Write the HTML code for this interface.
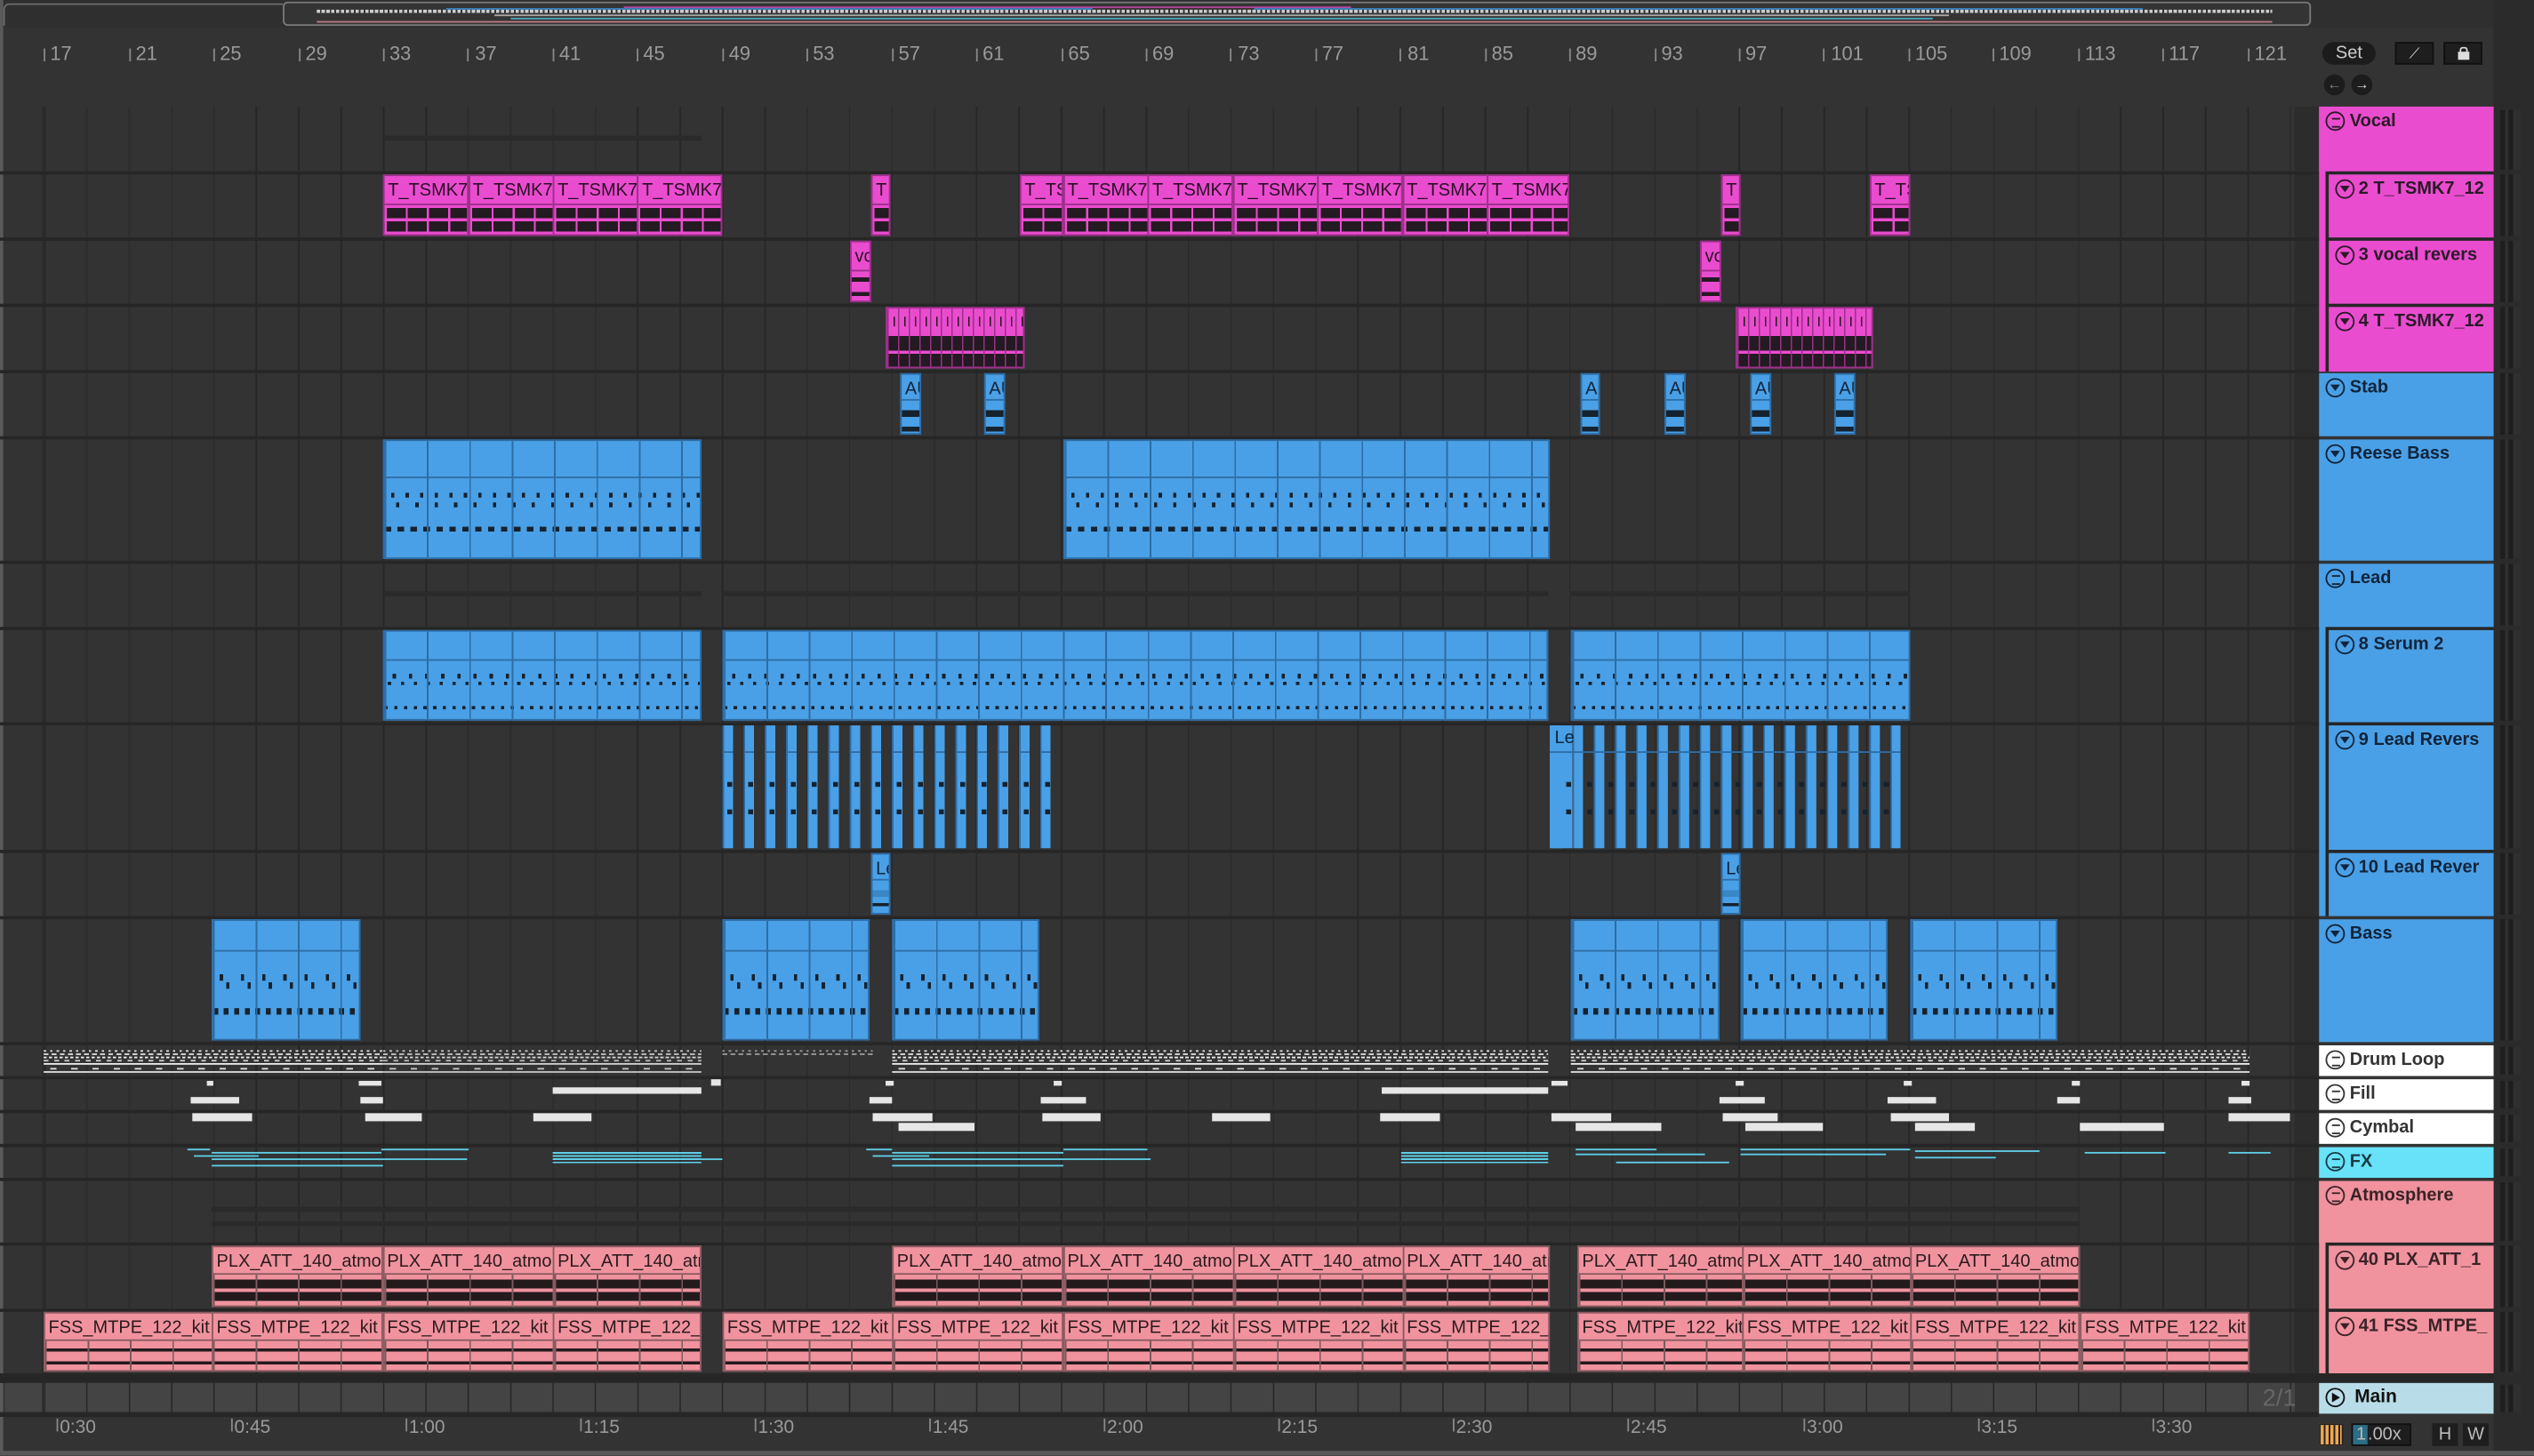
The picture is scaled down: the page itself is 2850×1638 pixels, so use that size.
<!DOCTYPE html>
<html><head><meta charset="utf-8"><style>
html,body{margin:0;padding:0;background:#2b2b2b;overflow:hidden;width:2850px;height:1638px}
#s{position:absolute;left:0;top:0;width:1568px;height:901.2px;transform:scale(1.8176);transform-origin:0 0;background:#333;font-family:"Liberation Sans",sans-serif;overflow:hidden}
.a{position:absolute}
.sep{position:absolute;left:0;width:1435px;height:2px;background:#262626}
.c{position:absolute;box-sizing:border-box;overflow:hidden;font-size:11px;white-space:nowrap}
.c b{position:absolute;left:2px;top:1.5px;font-weight:normal;line-height:14px}
.p{background:#ea4ccf;border:1px solid #9b2f8a;color:#2a0f26}
.pw{position:absolute;left:0;right:0;top:17px;bottom:0;border-top:1px solid #9b2f8a;background-color:#ea4ccf;background-image:repeating-linear-gradient(90deg,#ea4ccf 0 1.2px,#0000 1.2px 13.11px),linear-gradient(#0000 10%,#241a22 10% 45%,#0000 45% 55%,#241a22 55% 90%,#0000 90%)}
.s{background:#f0939f;border:1px solid #8a5a60;color:#2a1a1c}
.sw{position:absolute;left:0;right:0;top:16px;bottom:0;border-top:1px solid #8a5a60;background:repeating-linear-gradient(90deg,#7a5a5e 0 1px,#0000 1px 26.2px),linear-gradient(#0000 15%,#231a1c 15% 44%,#0000 44% 56%,#231a1c 56% 85%,#0000 85%)}
.sw2{position:absolute;left:0;right:0;top:16px;bottom:0;border-top:1px solid #8a5a60;background:repeating-linear-gradient(90deg,#7a5a5e 0 1px,#0000 1px 26.2px),linear-gradient(#0000 26%,#231a1c 26% 36%,#0000 36% 70%,#231a1c 70% 80%,#0000 80%)}
.b{background:#4aa0e6;border:1px solid #2d6da6;color:#10243a}
.bh{position:absolute;left:0;right:0;top:15px;height:1px;background:#2d6da6}
.hd{position:absolute;box-sizing:border-box;font-weight:bold;font-size:11px;color:#2a1a28}
.hd i{position:absolute;left:4px;top:3px;width:12px;height:12px;border:1.3px solid currentColor;border-radius:50%;box-sizing:border-box}
.hd i.t::after{content:"";position:absolute;left:2.4px;top:3.2px;border-left:3px solid transparent;border-right:3px solid transparent;border-top:4px solid currentColor}
.hd i.l::after{content:"";position:absolute;left:2.5px;top:2.8px;width:5px;height:4px;border-top:1px solid currentColor;border-bottom:1px solid currentColor}
.hd span{position:absolute;left:19px;top:3px;line-height:13px}
.m{position:absolute;left:1547px;width:13px;background:repeating-linear-gradient(90deg,#1e1e1e 0 3px,#2f2f2f 3px 5px,#1e1e1e 5px 8px,#2f2f2f 8px 13px)}
.rn{position:absolute;top:26px;font-size:12px;color:#9a9a9a}
.rt{position:absolute;top:30px;width:1px;height:8px;background:#888}
.tl{position:absolute;top:878px;font-size:11.5px;color:#9a9a9a}
.tt{position:absolute;top:878px;width:1px;height:8px;background:#888}
.w{position:absolute;background:#e6e6e6}
.fx{position:absolute;height:1px;background:#5fd0e8}
.dl{position:absolute;height:16px;background:
repeating-linear-gradient(90deg,#ddd 0 1.5px,#0000 1.5px 4px) 0 2px/100% 1px no-repeat,
repeating-linear-gradient(90deg,#ddd 0 3px,#0000 3px 5px) 0 4px/100% 1.2px no-repeat,
repeating-linear-gradient(90deg,#eee 0 2px,#0000 2px 3.3px) 0 6px/100% 1.2px no-repeat,
repeating-linear-gradient(90deg,#ccc 0 3px,#0000 3px 6.5px) 0 8px/100% 1px no-repeat,
linear-gradient(#eee,#eee) 0 10px/100% 1px no-repeat,
repeating-linear-gradient(90deg,#0000 0 4px,#ddd 4px 8px,#0000 8px 13.1px) 0 12.5px/100% 1px no-repeat,
linear-gradient(#ddd,#ddd) 0 14.5px/100% 1px no-repeat}
.grp{position:absolute;height:3px;background:#2a2a2a}
</style></head><body><div id="s">

<div class="a" style="left:0;top:0;width:1568px;height:17px;background:#2f2f2f"></div>
<div class="a" style="left:2px;top:2px;width:173px;height:14px;border:1.5px solid #6e6e6e;border-right:none;border-bottom:none;border-radius:4px 0 0 0;box-sizing:border-box"></div>
<div class="a" style="left:175px;top:1px;width:1255px;height:15px;border:1.5px solid #7a7a7a;border-radius:3px;box-sizing:border-box;background:#343434">
 <div class="a" style="left:20px;top:4px;width:1210px;height:2px;background:repeating-linear-gradient(90deg,#ccc 0 2px,#0000 2px 3px)"></div>
 <div class="a" style="left:210px;top:2px;width:450px;height:1px;background:#b348a0"></div>
 <div class="a" style="left:100px;top:3px;width:400px;height:1px;background:#3b82c0"></div>
 <div class="a" style="left:600px;top:3px;width:550px;height:1px;background:#3b82c0"></div>
 <div class="a" style="left:130px;top:7px;width:900px;height:1px;background:#aaa"></div>
 <div class="a" style="left:140px;top:9px;width:880px;height:1px;background:#4aa7bd"></div>
 <div class="a" style="left:20px;top:11px;width:1210px;height:1px;background:#c07a85"></div>
</div>
<div class="a" style="left:0;top:17px;width:1435px;height:49px;background:#333"></div>
<div class="a" style="left:0;top:0;width:2px;height:901px;background:#5a5a5a"></div>

<div class="rt" style="left:27px"></div><div class="rn" style="left:31px">17</div>
<div class="rt" style="left:79.6px"></div><div class="rn" style="left:84px">21</div>
<div class="rt" style="left:132px"></div><div class="rn" style="left:136px">25</div>
<div class="rt" style="left:184.5px"></div><div class="rn" style="left:189px">29</div>
<div class="rt" style="left:237px"></div><div class="rn" style="left:241px">33</div>
<div class="rt" style="left:289.4px"></div><div class="rn" style="left:294px">37</div>
<div class="rt" style="left:341.8px"></div><div class="rn" style="left:346px">41</div>
<div class="rt" style="left:394.3px"></div><div class="rn" style="left:398px">45</div>
<div class="rt" style="left:446.7px"></div><div class="rn" style="left:451px">49</div>
<div class="rt" style="left:499.2px"></div><div class="rn" style="left:503px">53</div>
<div class="rt" style="left:551.6px"></div><div class="rn" style="left:556px">57</div>
<div class="rt" style="left:604px"></div><div class="rn" style="left:608px">61</div>
<div class="rt" style="left:656.5px"></div><div class="rn" style="left:661px">65</div>
<div class="rt" style="left:708.9px"></div><div class="rn" style="left:713px">69</div>
<div class="rt" style="left:761.4px"></div><div class="rn" style="left:766px">73</div>
<div class="rt" style="left:813.8px"></div><div class="rn" style="left:818px">77</div>
<div class="rt" style="left:866.2px"></div><div class="rn" style="left:871px">81</div>
<div class="rt" style="left:918.7px"></div><div class="rn" style="left:923px">85</div>
<div class="rt" style="left:971.1px"></div><div class="rn" style="left:975px">89</div>
<div class="rt" style="left:1023.6px"></div><div class="rn" style="left:1028px">93</div>
<div class="rt" style="left:1076px"></div><div class="rn" style="left:1080px">97</div>
<div class="rt" style="left:1128.4px"></div><div class="rn" style="left:1133px">101</div>
<div class="rt" style="left:1180.9px"></div><div class="rn" style="left:1185px">105</div>
<div class="rt" style="left:1233.3px"></div><div class="rn" style="left:1237px">109</div>
<div class="rt" style="left:1285.8px"></div><div class="rn" style="left:1290px">113</div>
<div class="rt" style="left:1338.2px"></div><div class="rn" style="left:1342px">117</div>
<div class="rt" style="left:1390.6px"></div><div class="rn" style="left:1395px">121</div>

<div class="a" style="left:1437px;top:26px;width:33px;height:14px;background:#1c1c1c;border-radius:7px;color:#ccc;font-size:11px;text-align:center;line-height:14px">Set</div>
<div class="a" style="left:1482px;top:26px;width:24px;height:14px;background:#1e1e1e;border:1px solid #111;box-sizing:border-box;color:#ddd;font-size:9px;text-align:center;line-height:12px">⟋</div>
<div class="a" style="left:1512px;top:26px;width:24px;height:14px;background:#1e1e1e;border:1px solid #111;box-sizing:border-box"><div class="a" style="left:8px;top:5px;width:7px;height:5px;background:#ddd"></div><div class="a" style="left:9px;top:2px;width:3px;height:4px;border:1px solid #ddd;border-bottom:none;border-radius:2px 2px 0 0"></div></div>
<div class="a" style="left:1438px;top:46px;width:13px;height:13px;background:#1c1c1c;border-radius:50%;color:#888;font-size:9px;text-align:center;line-height:13px">←</div>
<div class="a" style="left:1455px;top:46px;width:13px;height:13px;background:#1c1c1c;border-radius:50%;color:#ddd;font-size:9px;text-align:center;line-height:13px">→</div>

<div class="a" style="left:3px;top:66px;width:1417px;height:786px;background:repeating-linear-gradient(90deg,#262626 0 0.8px,#333 0.8px 26.22px);background-position:24.2px 0"></div>
<div class="a" style="left:1420px;top:66px;width:15px;height:786px;background:#2c2c2c"></div>
<div class="a" style="left:1543px;top:0;width:25px;height:901px;background:#2b2b2b"></div>

<div class="sep" style="top:106px"></div><div class="sep" style="top:147px"></div><div class="sep" style="top:188px"></div><div class="sep" style="top:229px"></div><div class="sep" style="top:270px"></div><div class="sep" style="top:347px"></div><div class="sep" style="top:388px"></div><div class="sep" style="top:447px"></div><div class="sep" style="top:526px"></div><div class="sep" style="top:567px"></div><div class="sep" style="top:645px"></div><div class="sep" style="top:666px"></div><div class="sep" style="top:687px"></div><div class="sep" style="top:708px"></div><div class="sep" style="top:729px"></div><div class="sep" style="top:769px"></div><div class="sep" style="top:810px"></div>
<div class="a" style="left:0;top:850px;width:1543px;height:6px;background:#262626"></div>
<div class="a" style="left:3px;top:856px;width:1417px;height:19px;background:#444 repeating-linear-gradient(90deg,#262626 0 0.8px,#444 0.8px 26.22px);background-position:24.2px 0"></div>
<div class="a" style="left:0;top:874px;width:1435px;height:3px;background:#262626"></div>
<div class="a" style="left:1400px;top:856px;width:35px;height:19px;color:#666;font-size:15px;line-height:19px">2/1</div>

<div class="grp" style="left:237px;top:84px;width:197px"></div>
<div class="grp" style="left:237px;top:366px;width:197px"></div><div class="grp" style="left:447px;top:366px;width:511px"></div><div class="grp" style="left:972px;top:366px;width:210px"></div>
<div class="grp" style="left:131px;top:747px;width:1156px"></div><div class="grp" style="left:131px;top:756px;width:1156px"></div>

<div class="c p" style="left:237px;top:108px;width:53px;height:38px"><b>T_TSMK7</b><div class="pw"></div></div>
<div class="c p" style="left:289.5px;top:108px;width:53px;height:38px"><b>T_TSMK7</b><div class="pw"></div></div>
<div class="c p" style="left:342px;top:108px;width:53px;height:38px"><b>T_TSMK7</b><div class="pw"></div></div>
<div class="c p" style="left:394.3px;top:108px;width:52.5px;height:38px"><b>T_TSMK7</b><div class="pw"></div></div>
<div class="c p" style="left:539px;top:108px;width:12px;height:38px"><b>T</b><div class="pw"></div></div>
<div class="c p" style="left:631px;top:108px;width:27px;height:38px"><b>T_TS</b><div class="pw"></div></div>
<div class="c p" style="left:657.5px;top:108px;width:53px;height:38px"><b>T_TSMK7</b><div class="pw"></div></div>
<div class="c p" style="left:710px;top:108px;width:53px;height:38px"><b>T_TSMK7</b><div class="pw"></div></div>
<div class="c p" style="left:762.5px;top:108px;width:53px;height:38px"><b>T_TSMK7</b><div class="pw"></div></div>
<div class="c p" style="left:815px;top:108px;width:53px;height:38px"><b>T_TSMK7</b><div class="pw"></div></div>
<div class="c p" style="left:867.5px;top:108px;width:53px;height:38px"><b>T_TSMK7</b><div class="pw"></div></div>
<div class="c p" style="left:920px;top:108px;width:51px;height:38px"><b>T_TSMK7</b><div class="pw"></div></div>
<div class="c p" style="left:1065px;top:108px;width:12px;height:38px"><b>T</b><div class="pw"></div></div>
<div class="c p" style="left:1157px;top:108px;width:25px;height:38px"><b>T_TS</b><div class="pw"></div></div>
<div class="c p" style="left:526px;top:149px;width:13px;height:38px"><b>vo</b><div class="pw" style="background-image:linear-gradient(#0000 20%,#241a22 20% 35%,#0000 35% 70%,#241a22 70% 85%,#0000 85%)"></div></div>
<div class="c p" style="left:1052px;top:149px;width:13px;height:38px"><b>vo</b><div class="pw" style="background-image:linear-gradient(#0000 20%,#241a22 20% 35%,#0000 35% 70%,#241a22 70% 85%,#0000 85%)"></div></div>
<div class="c p" style="left:548px;top:190px;width:86px;height:38px;background:repeating-linear-gradient(90deg,#9b2f89 0 0.8px,#0000 0.8px 6.6px),repeating-linear-gradient(90deg,#0000 0 4px,#241a22 4px 4.8px,#0000 4.8px 6.6px) 0 5px/100% 6px no-repeat,linear-gradient(#0000 17px,#241a22 17px 26px,#0000 26px 28px,#241a22 28px 36px,#0000 36px),#ea4ccf"></div>
<div class="c p" style="left:1074px;top:190px;width:85px;height:38px;background:repeating-linear-gradient(90deg,#9b2f89 0 0.8px,#0000 0.8px 6.6px),repeating-linear-gradient(90deg,#0000 0 4px,#241a22 4px 4.8px,#0000 4.8px 6.6px) 0 5px/100% 6px no-repeat,linear-gradient(#0000 17px,#241a22 17px 26px,#0000 26px 28px,#241a22 28px 36px,#0000 36px),#ea4ccf"></div>

<div class="c b" style="left:557px;top:231px;width:13px;height:38px;background:linear-gradient(#0000 22px,#16222e 22px 26px,#0000 26px 32px,#16222e 32px 35px,#0000 35px),#4aa0e6"><b>AU</b><div class="bh"></div></div>
<div class="c b" style="left:609px;top:231px;width:13px;height:38px;background:linear-gradient(#0000 22px,#16222e 22px 26px,#0000 26px 32px,#16222e 32px 35px,#0000 35px),#4aa0e6"><b>AU</b><div class="bh"></div></div>
<div class="c b" style="left:978px;top:231px;width:12px;height:38px;background:linear-gradient(#0000 22px,#16222e 22px 26px,#0000 26px 32px,#16222e 32px 35px,#0000 35px),#4aa0e6"><b>AU</b><div class="bh"></div></div>
<div class="c b" style="left:1030px;top:231px;width:13px;height:38px;background:linear-gradient(#0000 22px,#16222e 22px 26px,#0000 26px 32px,#16222e 32px 35px,#0000 35px),#4aa0e6"><b>AU</b><div class="bh"></div></div>
<div class="c b" style="left:1083px;top:231px;width:13px;height:38px;background:linear-gradient(#0000 22px,#16222e 22px 26px,#0000 26px 32px,#16222e 32px 35px,#0000 35px),#4aa0e6"><b>AU</b><div class="bh"></div></div>
<div class="c b" style="left:1135px;top:231px;width:13px;height:38px;background:linear-gradient(#0000 22px,#16222e 22px 26px,#0000 26px 32px,#16222e 32px 35px,#0000 35px),#4aa0e6"><b>AU</b><div class="bh"></div></div>

<div class="c b" style="left:237px;top:272px;width:197px;height:74px;background:repeating-linear-gradient(90deg,#2d6da6 0 1px,#0000 1px 26.22px),repeating-linear-gradient(90deg,#0000 0 4px,#16222e 4px 6px,#0000 6px 9px) 0 32px/100% 3px no-repeat,repeating-linear-gradient(90deg,#0000 0 7px,#16222e 7px 9px,#0000 9px 12px) 0 38px/100% 3px no-repeat,repeating-linear-gradient(90deg,#16222e 0 4px,#0000 4px 8px) 0 53px/100% 3px no-repeat,#4aa0e6"><div class="bh" style="top:22px"></div></div>
<div class="c b" style="left:657.5px;top:272px;width:301px;height:74px;background:repeating-linear-gradient(90deg,#2d6da6 0 1px,#0000 1px 26.22px),repeating-linear-gradient(90deg,#0000 0 4px,#16222e 4px 6px,#0000 6px 9px) 0 32px/100% 3px no-repeat,repeating-linear-gradient(90deg,#0000 0 7px,#16222e 7px 9px,#0000 9px 12px) 0 38px/100% 3px no-repeat,repeating-linear-gradient(90deg,#16222e 0 4px,#0000 4px 8px) 0 53px/100% 3px no-repeat,#4aa0e6"><div class="bh" style="top:22px"></div></div>

<div class="c b" style="left:237px;top:390px;width:197px;height:56px;background:repeating-linear-gradient(90deg,#2d6da6 0 1px,#0000 1px 26.22px),repeating-linear-gradient(90deg,#0000 0 5px,#16222e 5px 7px,#0000 7px 10px) 0 26px/100% 3px no-repeat,repeating-linear-gradient(90deg,#0000 0 2px,#16222e 2px 4px,#0000 4px 8px) 0 31px/100% 2px no-repeat,repeating-linear-gradient(90deg,#16222e 0 2px,#0000 2px 6px) 0 46px/100% 2px no-repeat,#4aa0e6"><div class="bh" style="top:17px"></div></div>
<div class="c b" style="left:447px;top:390px;width:511px;height:56px;background:repeating-linear-gradient(90deg,#2d6da6 0 1px,#0000 1px 26.22px),repeating-linear-gradient(90deg,#0000 0 5px,#16222e 5px 7px,#0000 7px 10px) 0 26px/100% 3px no-repeat,repeating-linear-gradient(90deg,#0000 0 2px,#16222e 2px 4px,#0000 4px 8px) 0 31px/100% 2px no-repeat,repeating-linear-gradient(90deg,#16222e 0 2px,#0000 2px 6px) 0 46px/100% 2px no-repeat,#4aa0e6"><div class="bh" style="top:17px"></div></div>
<div class="c b" style="left:972px;top:390px;width:210px;height:56px;background:repeating-linear-gradient(90deg,#2d6da6 0 1px,#0000 1px 26.22px),repeating-linear-gradient(90deg,#0000 0 5px,#16222e 5px 7px,#0000 7px 10px) 0 26px/100% 3px no-repeat,repeating-linear-gradient(90deg,#0000 0 2px,#16222e 2px 4px,#0000 4px 8px) 0 31px/100% 2px no-repeat,repeating-linear-gradient(90deg,#16222e 0 2px,#0000 2px 6px) 0 46px/100% 2px no-repeat,#4aa0e6"><div class="bh" style="top:17px"></div></div>

<div class="a" style="left:447px;top:449px;width:205px;height:76px;background:repeating-linear-gradient(90deg,#2d6da6 0 1px,#4aa0e6 1px 6.5px,#0000 6.5px 13.11px)"></div>
<div class="a" style="left:447px;top:465px;width:205px;height:1px;background:repeating-linear-gradient(90deg,#2d6da6 0 6.5px,#0000 6.5px 13.11px)"></div>
<div class="a" style="left:447px;top:484px;width:205px;height:20px;background:repeating-linear-gradient(90deg,#0000 0 3px,#16222e 3px 6px,#0000 6px 13.11px) 0 0/100% 3px no-repeat,repeating-linear-gradient(90deg,#0000 0 3px,#16222e 3px 6px,#0000 6px 13.11px) 0 17px/100% 3px no-repeat"></div>
<div class="a" style="left:959px;top:449px;width:217px;height:76px;background:linear-gradient(90deg,#4aa0e6 0 14px,#0000 14px),repeating-linear-gradient(90deg,#2d6da6 0 1px,#4aa0e6 1px 6.5px,#0000 6.5px 13.11px);background-position:0 0,1px 0"></div>
<div class="a" style="left:959px;top:465px;width:217px;height:1px;background:#2d6da6"></div>
<div class="a" style="left:962px;top:451px;font-size:11px;color:#10243a">Le</div>
<div class="a" style="left:959px;top:484px;width:217px;height:20px;background:repeating-linear-gradient(90deg,#0000 0 10px,#16222e 10px 13.11px) 0 0/100% 3px no-repeat,repeating-linear-gradient(90deg,#0000 0 10px,#16222e 10px 13.11px) 0 17px/100% 3px no-repeat"></div>

<div class="c b" style="left:539px;top:528px;width:12px;height:38px;background:linear-gradient(#0000 22px,#3a87c8 22px 26px,#0000 26px 30px,#16222e 30px 32px,#0000 32px),#4aa0e6"><b>Le</b><div class="bh"></div></div>
<div class="c b" style="left:1065px;top:528px;width:12px;height:38px;background:linear-gradient(#0000 22px,#3a87c8 22px 26px,#0000 26px 30px,#16222e 30px 32px,#0000 32px),#4aa0e6"><b>Le</b><div class="bh"></div></div>

<div class="c b" style="left:131px;top:569px;width:92px;height:75px;background:repeating-linear-gradient(90deg,#2d6da6 0 1px,#0000 1px 26.22px),repeating-linear-gradient(90deg,#0000 0 4px,#16222e 4px 6px,#0000 6px 13.11px) 0 33px/100% 4px no-repeat,repeating-linear-gradient(90deg,#0000 0 8px,#16222e 8px 10px,#0000 10px 13.11px) 0 38px/100% 4px no-repeat,repeating-linear-gradient(90deg,#16222e 0 3px,#0000 3px 6.5px) 0 54px/100% 4px no-repeat,#4aa0e6"><div class="bh" style="top:18px"></div></div>
<div class="c b" style="left:447px;top:569px;width:91px;height:75px;background:repeating-linear-gradient(90deg,#2d6da6 0 1px,#0000 1px 26.22px),repeating-linear-gradient(90deg,#0000 0 4px,#16222e 4px 6px,#0000 6px 13.11px) 0 33px/100% 4px no-repeat,repeating-linear-gradient(90deg,#0000 0 8px,#16222e 8px 10px,#0000 10px 13.11px) 0 38px/100% 4px no-repeat,repeating-linear-gradient(90deg,#16222e 0 3px,#0000 3px 6.5px) 0 54px/100% 4px no-repeat,#4aa0e6"><div class="bh" style="top:18px"></div></div>
<div class="c b" style="left:552px;top:569px;width:91px;height:75px;background:repeating-linear-gradient(90deg,#2d6da6 0 1px,#0000 1px 26.22px),repeating-linear-gradient(90deg,#0000 0 4px,#16222e 4px 6px,#0000 6px 13.11px) 0 33px/100% 4px no-repeat,repeating-linear-gradient(90deg,#0000 0 8px,#16222e 8px 10px,#0000 10px 13.11px) 0 38px/100% 4px no-repeat,repeating-linear-gradient(90deg,#16222e 0 3px,#0000 3px 6.5px) 0 54px/100% 4px no-repeat,#4aa0e6"><div class="bh" style="top:18px"></div></div>
<div class="c b" style="left:972px;top:569px;width:92px;height:75px;background:repeating-linear-gradient(90deg,#2d6da6 0 1px,#0000 1px 26.22px),repeating-linear-gradient(90deg,#0000 0 4px,#16222e 4px 6px,#0000 6px 13.11px) 0 33px/100% 4px no-repeat,repeating-linear-gradient(90deg,#0000 0 8px,#16222e 8px 10px,#0000 10px 13.11px) 0 38px/100% 4px no-repeat,repeating-linear-gradient(90deg,#16222e 0 3px,#0000 3px 6.5px) 0 54px/100% 4px no-repeat,#4aa0e6"><div class="bh" style="top:18px"></div></div>
<div class="c b" style="left:1077px;top:569px;width:91px;height:75px;background:repeating-linear-gradient(90deg,#2d6da6 0 1px,#0000 1px 26.22px),repeating-linear-gradient(90deg,#0000 0 4px,#16222e 4px 6px,#0000 6px 13.11px) 0 33px/100% 4px no-repeat,repeating-linear-gradient(90deg,#0000 0 8px,#16222e 8px 10px,#0000 10px 13.11px) 0 38px/100% 4px no-repeat,repeating-linear-gradient(90deg,#16222e 0 3px,#0000 3px 6.5px) 0 54px/100% 4px no-repeat,#4aa0e6"><div class="bh" style="top:18px"></div></div>
<div class="c b" style="left:1182px;top:569px;width:91px;height:75px;background:repeating-linear-gradient(90deg,#2d6da6 0 1px,#0000 1px 26.22px),repeating-linear-gradient(90deg,#0000 0 4px,#16222e 4px 6px,#0000 6px 13.11px) 0 33px/100% 4px no-repeat,repeating-linear-gradient(90deg,#0000 0 8px,#16222e 8px 10px,#0000 10px 13.11px) 0 38px/100% 4px no-repeat,repeating-linear-gradient(90deg,#16222e 0 3px,#0000 3px 6.5px) 0 54px/100% 4px no-repeat,#4aa0e6"><div class="bh" style="top:18px"></div></div>

<div class="dl" style="left:27px;top:648px;width:210px"></div>
<div class="dl" style="left:237px;top:648px;width:197px;opacity:.85"></div>
<div class="dl" style="left:447px;top:648px;width:93px;opacity:.6;height:6px"></div>
<div class="dl" style="left:552px;top:648px;width:406px"></div>
<div class="dl" style="left:972px;top:648px;width:420px"></div>

<div class="w" style="left:128px;top:669px;width:4px;height:3px"></div>
<div class="w" style="left:222px;top:669px;width:14px;height:3px"></div>
<div class="w" style="left:118px;top:679px;width:30px;height:4px"></div>
<div class="w" style="left:223px;top:679px;width:14px;height:4px"></div>
<div class="w" style="left:342px;top:673px;width:92px;height:4px"></div>
<div class="w" style="left:440px;top:668px;width:6px;height:4px"></div>
<div class="w" style="left:538px;top:679px;width:14px;height:4px"></div>
<div class="w" style="left:548px;top:669px;width:5px;height:3px"></div>
<div class="w" style="left:644px;top:679px;width:28px;height:4px"></div>
<div class="w" style="left:652px;top:669px;width:5px;height:3px"></div>
<div class="w" style="left:855px;top:673px;width:103px;height:4px"></div>
<div class="w" style="left:960px;top:669px;width:10px;height:3px"></div>
<div class="w" style="left:1064px;top:679px;width:28px;height:4px"></div>
<div class="w" style="left:1074px;top:669px;width:5px;height:3px"></div>
<div class="w" style="left:1168px;top:679px;width:30px;height:4px"></div>
<div class="w" style="left:1178px;top:669px;width:5px;height:3px"></div>
<div class="w" style="left:1273px;top:679px;width:14px;height:4px"></div>
<div class="w" style="left:1282px;top:669px;width:5px;height:3px"></div>
<div class="w" style="left:1379px;top:679px;width:14px;height:4px"></div>
<div class="w" style="left:1387px;top:669px;width:5px;height:3px"></div>
<div class="w" style="left:119px;top:689px;width:37px;height:5px"></div>
<div class="w" style="left:226px;top:689px;width:35px;height:5px"></div>
<div class="w" style="left:330px;top:689px;width:36px;height:5px"></div>
<div class="w" style="left:540px;top:689px;width:37px;height:5px"></div>
<div class="w" style="left:556px;top:695px;width:47px;height:5px"></div>
<div class="w" style="left:645px;top:689px;width:36px;height:5px"></div>
<div class="w" style="left:750px;top:689px;width:36px;height:5px"></div>
<div class="w" style="left:854px;top:689px;width:37px;height:5px"></div>
<div class="w" style="left:960px;top:689px;width:37px;height:5px"></div>
<div class="w" style="left:975px;top:695px;width:53px;height:5px"></div>
<div class="w" style="left:1066px;top:689px;width:34px;height:5px"></div>
<div class="w" style="left:1080px;top:695px;width:48px;height:5px"></div>
<div class="w" style="left:1170px;top:689px;width:36px;height:5px"></div>
<div class="w" style="left:1185px;top:695px;width:37px;height:5px"></div>
<div class="w" style="left:1287px;top:695px;width:52px;height:5px"></div>
<div class="w" style="left:1379px;top:689px;width:38px;height:5px"></div>
<div class="fx" style="left:116px;top:711px;width:14px"></div><div class="fx" style="left:131px;top:713px;width:105px"></div><div class="fx" style="left:120px;top:715px;width:40px"></div><div class="fx" style="left:131px;top:717px;width:158px"></div><div class="fx" style="left:131px;top:721px;width:106px"></div>
<div class="fx" style="left:236px;top:711px;width:54px"></div>
<div class="fx" style="left:342px;top:713px;width:92px;height:8px;background:repeating-linear-gradient(#5fd0e8 0 1px,#0000 1px 2px)"></div><div class="fx" style="left:434px;top:717px;width:13px"></div>
<div class="fx" style="left:536px;top:711px;width:16px"></div><div class="fx" style="left:552px;top:713px;width:106px"></div><div class="fx" style="left:540px;top:715px;width:35px"></div><div class="fx" style="left:552px;top:717px;width:160px"></div><div class="fx" style="left:552px;top:721px;width:106px"></div>
<div class="fx" style="left:658px;top:711px;width:52px"></div>
<div class="fx" style="left:867px;top:713px;width:91px;height:8px;background:repeating-linear-gradient(#5fd0e8 0 1px,#0000 1px 2px)"></div>
<div class="fx" style="left:975px;top:711px;width:50px"></div><div class="fx" style="left:975px;top:714px;width:80px"></div><div class="fx" style="left:1000px;top:719px;width:70px"></div>
<div class="fx" style="left:1077px;top:711px;width:105px"></div><div class="fx" style="left:1077px;top:714px;width:90px"></div><div class="fx" style="left:1185px;top:712px;width:77px"></div><div class="fx" style="left:1185px;top:716px;width:50px"></div>
<div class="fx" style="left:1290px;top:713px;width:50px"></div><div class="fx" style="left:1379px;top:713px;width:26px"></div>

<div class="c s" style="left:131px;top:771px;width:106px;height:38px"><b>PLX_ATT_140_atmo</b><div class="sw"></div></div>
<div class="c s" style="left:236.5px;top:771px;width:106px;height:38px"><b>PLX_ATT_140_atmo</b><div class="sw"></div></div>
<div class="c s" style="left:342px;top:771px;width:92px;height:38px"><b>PLX_ATT_140_atmo</b><div class="sw"></div></div>
<div class="c s" style="left:552px;top:771px;width:106px;height:38px"><b>PLX_ATT_140_atmo</b><div class="sw"></div></div>
<div class="c s" style="left:657.5px;top:771px;width:106px;height:38px"><b>PLX_ATT_140_atmo</b><div class="sw"></div></div>
<div class="c s" style="left:762.5px;top:771px;width:106px;height:38px"><b>PLX_ATT_140_atmo</b><div class="sw"></div></div>
<div class="c s" style="left:867.5px;top:771px;width:91px;height:38px"><b>PLX_ATT_140_atmo</b><div class="sw"></div></div>
<div class="c s" style="left:976px;top:771px;width:103px;height:38px"><b>PLX_ATT_140_atmo</b><div class="sw"></div></div>
<div class="c s" style="left:1078px;top:771px;width:105px;height:38px"><b>PLX_ATT_140_atmo</b><div class="sw"></div></div>
<div class="c s" style="left:1182px;top:771px;width:105px;height:38px"><b>PLX_ATT_140_atmo</b><div class="sw"></div></div>
<div class="c s" style="left:27px;top:812px;width:105px;height:37px"><b>FSS_MTPE_122_kit</b><div class="sw2"></div></div>
<div class="c s" style="left:131px;top:812px;width:106px;height:37px"><b>FSS_MTPE_122_kit</b><div class="sw2"></div></div>
<div class="c s" style="left:236.5px;top:812px;width:106px;height:37px"><b>FSS_MTPE_122_kit</b><div class="sw2"></div></div>
<div class="c s" style="left:342px;top:812px;width:92px;height:37px"><b>FSS_MTPE_122_kit</b><div class="sw2"></div></div>
<div class="c s" style="left:447px;top:812px;width:106px;height:37px"><b>FSS_MTPE_122_kit</b><div class="sw2"></div></div>
<div class="c s" style="left:552px;top:812px;width:106px;height:37px"><b>FSS_MTPE_122_kit</b><div class="sw2"></div></div>
<div class="c s" style="left:657.5px;top:812px;width:106px;height:37px"><b>FSS_MTPE_122_kit</b><div class="sw2"></div></div>
<div class="c s" style="left:762.5px;top:812px;width:106px;height:37px"><b>FSS_MTPE_122_kit</b><div class="sw2"></div></div>
<div class="c s" style="left:867.5px;top:812px;width:91px;height:37px"><b>FSS_MTPE_122_kit</b><div class="sw2"></div></div>
<div class="c s" style="left:976px;top:812px;width:103px;height:37px"><b>FSS_MTPE_122_kit</b><div class="sw2"></div></div>
<div class="c s" style="left:1078px;top:812px;width:105px;height:37px"><b>FSS_MTPE_122_kit</b><div class="sw2"></div></div>
<div class="c s" style="left:1182px;top:812px;width:105px;height:37px"><b>FSS_MTPE_122_kit</b><div class="sw2"></div></div>
<div class="c s" style="left:1287px;top:812px;width:105px;height:37px"><b>FSS_MTPE_122_kit</b><div class="sw2"></div></div>

<div class="a" style="left:1435px;top:66px;width:108px;height:164px;background:#ea4ccf"></div>
<div class="a" style="left:1439px;top:106px;width:104px;height:124px;background:#262626"></div>
<div class="hd" style="left:1435px;top:66px;width:108px;height:40px;background:#ea4ccf"><i class="l"></i><span>Vocal</span></div>
<div class="hd" style="left:1440.5px;top:108px;width:102.5px;height:39px;background:#ea4ccf"><i class="t"></i><span>2 T_TSMK7_12</span></div>
<div class="hd" style="left:1440.5px;top:149px;width:102.5px;height:39px;background:#ea4ccf"><i class="t"></i><span>3 vocal revers</span></div>
<div class="hd" style="left:1440.5px;top:190px;width:102.5px;height:40px;background:#ea4ccf"><i class="t"></i><span>4 T_TSMK7_12</span></div>
<div class="hd" style="left:1435px;top:231px;width:108px;height:39px;background:#4aa0e6;color:#10243a"><i class="t"></i><span>Stab</span></div>
<div class="hd" style="left:1435px;top:272px;width:108px;height:75px;background:#4aa0e6;color:#10243a"><i class="t"></i><span>Reese Bass</span></div>
<div class="a" style="left:1435px;top:349px;width:108px;height:218px;background:#4aa0e6"></div>
<div class="a" style="left:1439px;top:388px;width:104px;height:179px;background:#262626"></div>
<div class="hd" style="left:1435px;top:349px;width:108px;height:39px;background:#4aa0e6;color:#10243a"><i class="l"></i><span>Lead</span></div>
<div class="hd" style="left:1440.5px;top:390px;width:102.5px;height:57px;background:#4aa0e6;color:#10243a"><i class="t"></i><span>8 Serum 2</span></div>
<div class="hd" style="left:1440.5px;top:449px;width:102.5px;height:77px;background:#4aa0e6;color:#10243a"><i class="t"></i><span>9 Lead Revers</span></div>
<div class="hd" style="left:1440.5px;top:528px;width:102.5px;height:39px;background:#4aa0e6;color:#10243a"><i class="t"></i><span>10 Lead Rever</span></div>
<div class="hd" style="left:1435px;top:569px;width:108px;height:76px;background:#4aa0e6;color:#10243a"><i class="t"></i><span>Bass</span></div>
<div class="hd" style="left:1435px;top:647px;width:108px;height:19px;background:#fff;color:#333"><i class="l"></i><span>Drum Loop</span></div>
<div class="hd" style="left:1435px;top:668px;width:108px;height:19px;background:#fff;color:#333"><i class="l"></i><span>Fill</span></div>
<div class="hd" style="left:1435px;top:689px;width:108px;height:19px;background:#fff;color:#333"><i class="l"></i><span>Cymbal</span></div>
<div class="hd" style="left:1435px;top:710px;width:108px;height:19px;background:#67e2f8;color:#173a44"><i class="l"></i><span>FX</span></div>
<div class="a" style="left:1435px;top:731px;width:108px;height:119px;background:#f0939f"></div>
<div class="a" style="left:1439px;top:769px;width:104px;height:81px;background:#262626"></div>
<div class="hd" style="left:1435px;top:731px;width:108px;height:38px;background:#f0939f;color:#3a2226"><i class="l"></i><span>Atmosphere</span></div>
<div class="hd" style="left:1440.5px;top:771px;width:102.5px;height:39px;background:#f0939f;color:#3a2226"><i class="t"></i><span>40 PLX_ATT_1</span></div>
<div class="hd" style="left:1440.5px;top:812px;width:102.5px;height:38px;background:#f0939f;color:#3a2226"><i class="t"></i><span>41 FSS_MTPE_</span></div>
<div class="hd" style="left:1435px;top:856px;width:108px;height:19px;background:#b9dde8;color:#111"><i style="top:3px"></i><span style="left:22px;top:3px;font-size:11.5px">Main</span><span style="left:7.8px;top:6.2px;width:0;height:0;border-top:3px solid transparent;border-bottom:3px solid transparent;border-left:5px solid #111"></span></div>

<div class="m" style="top:68px;height:37px"></div><div class="m" style="top:108px;height:38px"></div><div class="m" style="top:149px;height:38px"></div><div class="m" style="top:190px;height:38px"></div><div class="m" style="top:231px;height:38px"></div><div class="m" style="top:272px;height:74px"></div><div class="m" style="top:349px;height:38px"></div><div class="m" style="top:390px;height:56px"></div><div class="m" style="top:449px;height:76px"></div><div class="m" style="top:528px;height:38px"></div><div class="m" style="top:569px;height:75px"></div><div class="m" style="top:648px;height:17px"></div><div class="m" style="top:669px;height:17px"></div><div class="m" style="top:690px;height:17px"></div><div class="m" style="top:711px;height:17px"></div><div class="m" style="top:732px;height:36px"></div><div class="m" style="top:771px;height:38px"></div><div class="m" style="top:812px;height:37px"></div><div class="m" style="top:857px;height:17px"></div>

<div class="tt" style="left:35px"></div><div class="tl" style="left:37px">0:30</div>
<div class="tt" style="left:143px"></div><div class="tl" style="left:145px">0:45</div>
<div class="tt" style="left:251px"></div><div class="tl" style="left:253px">1:00</div>
<div class="tt" style="left:359px"></div><div class="tl" style="left:361px">1:15</div>
<div class="tt" style="left:467px"></div><div class="tl" style="left:469px">1:30</div>
<div class="tt" style="left:575px"></div><div class="tl" style="left:577px">1:45</div>
<div class="tt" style="left:683px"></div><div class="tl" style="left:685px">2:00</div>
<div class="tt" style="left:791px"></div><div class="tl" style="left:793px">2:15</div>
<div class="tt" style="left:899px"></div><div class="tl" style="left:901px">2:30</div>
<div class="tt" style="left:1007px"></div><div class="tl" style="left:1009px">2:45</div>
<div class="tt" style="left:1116px"></div><div class="tl" style="left:1118px">3:00</div>
<div class="tt" style="left:1224px"></div><div class="tl" style="left:1226px">3:15</div>
<div class="tt" style="left:1332px"></div><div class="tl" style="left:1334px">3:30</div>

<div class="a" style="left:1435px;top:881px;width:15px;height:14px;background:#f0a850;border:1px solid #222;box-sizing:border-box;background-image:repeating-linear-gradient(90deg,#0000 0 2px,#222 2px 3px)"></div>
<div class="a" style="left:1455px;top:881px;width:37px;height:14px;background:#1e1e1e;border:1px solid #111;box-sizing:border-box;color:#bbb;font-size:11px;line-height:12px"><span style="background:#2b6e86;padding:0 1px 0 2px">1</span>.00x</div>
<div class="a" style="left:1505px;top:881px;width:16px;height:14px;background:#1e1e1e;color:#bbb;font-size:11px;text-align:center;line-height:14px">H</div>
<div class="a" style="left:1524px;top:881px;width:16px;height:14px;background:#1e1e1e;color:#bbb;font-size:11px;text-align:center;line-height:14px">W</div>
<div class="a" style="left:0;top:898px;width:1568px;height:3px;background:#5a5a5a"></div>
</div></body></html>
